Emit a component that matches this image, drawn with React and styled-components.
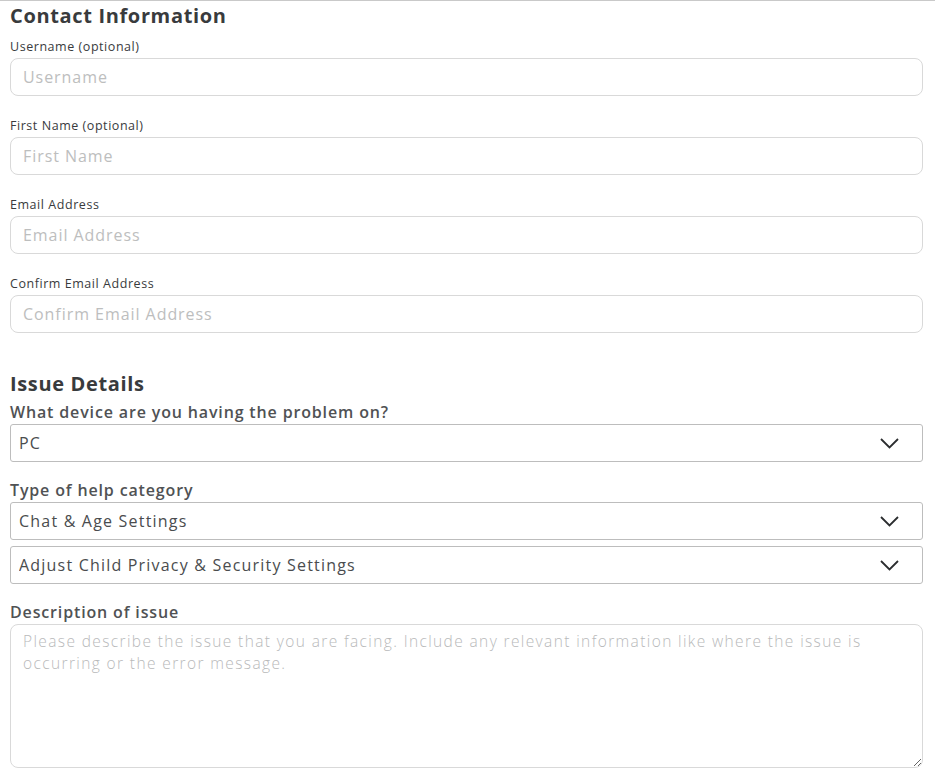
import React from 'react';
import styled, { createGlobalStyle } from 'styled-components';

const GlobalStyle = createGlobalStyle`
  body {
    margin: 0;
    background: #ffffff;
    font-family: "Open Sans", "Liberation Sans", sans-serif;
    color: #393b3d;
  }
  * { box-sizing: border-box; }
`;

const Page = styled.div`
  border-top: 1px solid #c9c9c9;
  padding: 0 12px 10px 10px;
`;

const SectionTitle = styled.h2`
  margin: ${(p) => (p.$first ? '3px' : '39px')} 0 0;
  font-size: 20px;
  line-height: 24px;
  font-weight: 700;
  letter-spacing: 0.65px;
  color: #393b3d;
`;

const Field = styled.div`
  display: flex;
  flex-direction: column;
  margin-top: ${(p) => p.$gap || 0}px;
`;

const SmallLabel = styled.label`
  font-size: 12.5px;
  line-height: 16px;
  letter-spacing: 0.55px;
  margin-bottom: 3px;
  color: #393b3d;
`;

const BigLabel = styled.label`
  font-size: 16px;
  line-height: 20px;
  font-weight: 600;
  letter-spacing: 0.85px;
  margin-bottom: 2px;
  color: #505254;
`;

const TextInput = styled.input`
  height: 38px;
  width: 100%;
  border: 1px solid #d9d9d9;
  border-radius: 8px;
  padding: 0 12px;
  font-family: inherit;
  font-size: 16px;
  letter-spacing: 0.95px;
  color: #393b3d;
  outline: none;
  &::placeholder { color: #bdbebe; }
`;

const SelectWrap = styled.div`
  position: relative;
  margin-top: ${(p) => p.$gap || 0}px;
`;

const Select = styled.select`
  appearance: none;
  height: 38px;
  width: 100%;
  border: 1px solid #bdbdbd;
  border-radius: 3px;
  background: #fff;
  padding: 0 48px 0 8px;
  font-family: inherit;
  font-size: 16px;
  letter-spacing: 1.2px;
  color: #4a4c4e;
  outline: none;
`;

const Chevron = styled.svg`
  position: absolute;
  right: 24px;
  top: 14px;
  pointer-events: none;
`;

const TextArea = styled.textarea`
  height: 144px;
  width: 100%;
  border: 1px solid #d9d9d9;
  border-radius: 8px;
  padding: 5px 12px;
  font-family: "Open Sans", "Liberation Sans", sans-serif;
  font-weight: 300;
  font-size: 15.5px;
  line-height: 22px;
  letter-spacing: 1.38px;
  color: #393b3d;
  outline: none;
  &::placeholder { color: #b8b9ba; }
`;

const Dropdown = ({ value, gap }) => (
  <SelectWrap $gap={gap}>
    <Select defaultValue={value}>
      <option>{value}</option>
    </Select>
    <Chevron width="19" height="11" viewBox="0 0 19 11" fill="none">
      <path d="M1 1l8.5 8.5L18 1" stroke="#2b2d2f" strokeWidth="1.8" />
    </Chevron>
  </SelectWrap>
);

const contactFields = [
  { label: 'Username (optional)', placeholder: 'Username' },
  { label: 'First Name (optional)', placeholder: 'First Name' },
  { label: 'Email Address', placeholder: 'Email Address' },
  { label: 'Confirm Email Address', placeholder: 'Confirm Email Address' },
];

export default function App() {
  return (
    <>
      <GlobalStyle />
      <Page>
        <SectionTitle $first>Contact Information</SectionTitle>
        {contactFields.map((f, i) => (
          <Field key={f.label} $gap={i === 0 ? 11 : 22}>
            <SmallLabel>{f.label}</SmallLabel>
            <TextInput placeholder={f.placeholder} />
          </Field>
        ))}

        <SectionTitle>Issue Details</SectionTitle>
        <Field $gap={6}>
          <BigLabel>What device are you having the problem on?</BigLabel>
          <Dropdown value="PC" />
        </Field>
        <Field $gap={18}>
          <BigLabel>Type of help category</BigLabel>
          <Dropdown value="Chat & Age Settings" />
          <Dropdown gap={6} value="Adjust Child Privacy & Security Settings" />
        </Field>
        <Field $gap={18}>
          <BigLabel>Description of issue</BigLabel>
          <TextArea placeholder="Please describe the issue that you are facing. Include any relevant information like where the issue is occurring or the error message." />
        </Field>
      </Page>
    </>
  );
}
